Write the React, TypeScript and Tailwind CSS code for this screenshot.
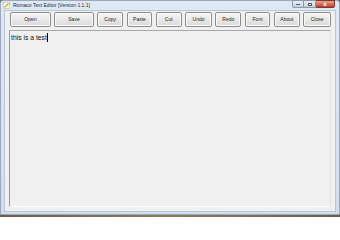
import React from "react";

const buttons = [
  { label: "Open", w: "w-[41px]" },
  { label: "Save", w: "w-[40px]" },
  { label: "Copy", w: "w-[26px]" },
  { label: "Paste", w: "w-[26px]" },
  { label: "Cut", w: "w-[26px]" },
  { label: "Undo", w: "w-[27px]" },
  { label: "Redo", w: "w-[26px]" },
  { label: "Font", w: "w-[26px]" },
  { label: "About", w: "w-[26px]" },
  { label: "Close", w: "w-[28px]" },
];

export default function App() {
  return (
    <div className="w-[340px] h-[217px] overflow-hidden bg-[#7a6a52] flex flex-col" style={{ fontFamily: '"Liberation Sans", Arial, sans-serif' }}>
      <div className="w-[340px] h-[215px] shrink-0 bg-gradient-to-b from-[#dfe9f5] to-[#d3deec] border border-[#9aa9bc] rounded-t-[3px] flex flex-col relative">
        {/* title bar */}
        <div className="h-[9px] shrink-0 flex items-center pl-[2px] relative">
          <svg width="7" height="7" viewBox="0 0 7 7" className="mr-[3px]">
            <rect x="0.5" y="0.5" width="6" height="6" fill="#fdfbe8" stroke="#c9b98a" strokeWidth="0.6" />
            <path d="M1.5 5.5 L5.5 1.5" stroke="#d8a23a" strokeWidth="1.2" />
          </svg>
          <span className="text-[5px] leading-none text-[#1b2a3b] whitespace-nowrap">Romaco Text Editor [Version 1.1.1]</span>
          <div className="absolute right-[4px] top-[-1px] flex">
            <div className="w-[12px] h-[8px] border border-[#8a98aa] rounded-bl-[2px] bg-gradient-to-b from-[#e9eef5] to-[#c5d0de] flex items-end justify-center pb-[2px]">
              <div className="w-[4px] h-[1px] bg-[#55606e]" />
            </div>
            <div className="w-[12px] h-[8px] border border-l-0 border-[#8a98aa] bg-gradient-to-b from-[#e9eef5] to-[#c5d0de] flex items-center justify-center">
              <div className="w-[4px] h-[3px] border border-[#55606e]" />
            </div>
            <div className="w-[19px] h-[8px] border border-l-0 border-[#7a3a32] rounded-br-[2px] bg-gradient-to-b from-[#e8a493] to-[#c0392b] flex items-center justify-center">
              <span className="text-[6px] leading-none text-white font-bold">x</span>
            </div>
          </div>
        </div>
        {/* client */}
        <div className="flex-1 mx-[3px] mb-[2px] bg-[#f0f0f0] border border-[#b9c6d6] flex flex-col px-[4px]">
          <div className="flex gap-[3.5px] pt-[1px] pl-[1px]">
            {buttons.map((b) => (
              <div
                key={b.label}
                className={`${b.w} h-[15px] rounded-[2px] border border-[#8d8d8d] bg-gradient-to-b from-[#f4f4f4] via-[#e9e9e9] to-[#d9d9d9] flex items-center justify-center shadow-[inset_0_0_0_1px_#fbfbfb]`}
              >
                <span className="text-[5px] leading-none text-[#222]">{b.label}</span>
              </div>
            ))}
          </div>
          <div className="mt-[3px] h-[177px] border-t border-l border-t-[#a8a8a8] border-l-[#9a9a9a] border-b border-r border-b-[#ffffff] border-r-[#e3e3e3] bg-[#f0f0f0] px-[1px] pt-[2px]">
            <div className="flex items-start">
              <span className="text-[6.8px] leading-[9px] text-[#111]">this is a test</span>
              <span className="w-[1px] h-[9px] bg-black ml-[0.5px]" />
            </div>
          </div>
        </div>
      </div>
      <div className="h-[2px] shrink-0 bg-gradient-to-r from-[#6e6048] via-[#8a7a60] to-[#6e6048]" />
    </div>
  );
}
